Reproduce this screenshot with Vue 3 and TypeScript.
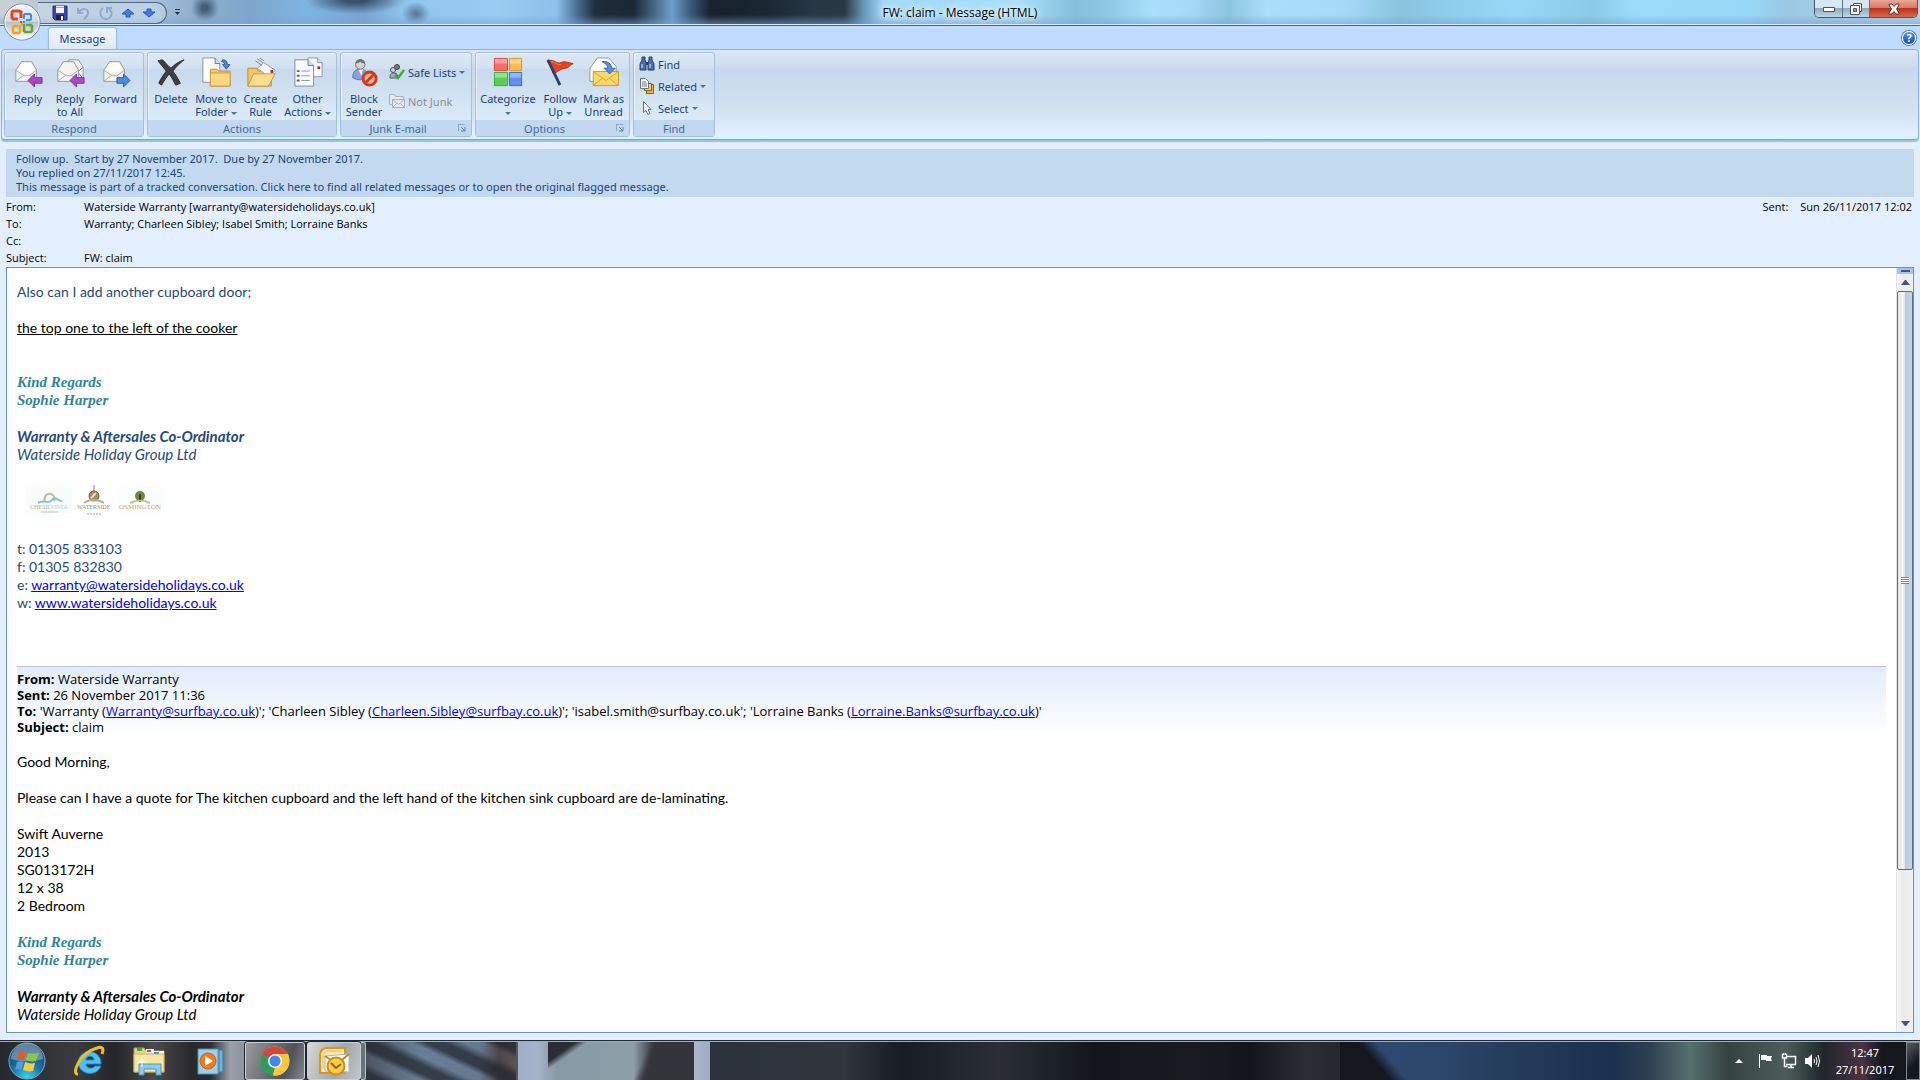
<script setup lang="ts">
interface HeaderRow {
  label: string
  value: string
}

const headerRows: HeaderRow[] = [
  { label: 'From:', value: 'Waterside Warranty [warranty@watersideholidays.co.uk]' },
  { label: 'To:', value: 'Warranty; Charleen Sibley; Isabel Smith; Lorraine Banks' },
  { label: 'Cc:', value: '' },
  { label: 'Subject:', value: 'FW: claim' },
]

const caravan: string[] = ['Swift Auverne', '2013', 'SG013172H', '12 x 38', '2 Bedroom']
</script>

<template>
  <div class="desktop">
    <div class="window">
      <header class="titlebar">
        <div class="quick-access">
          <button class="qat" type="button" aria-label="Save">
            <svg width="16" height="16" viewBox="0 0 16 16">
              <path d="M1 1h14v14H3l-2-2z" fill="#3f45a8" stroke="#2b2f7c" />
              <path d="M4 1h8v7H4z" fill="#eef3fd" />
              <path d="M4 2h8v1H4z" fill="#8fa4dc" />
              <path d="M4 10h8v5H4z" fill="#20244f" />
              <path d="M9 11h2v4H9z" fill="#fff" />
            </svg>
          </button>
          <button class="qat" type="button" aria-label="Undo">
            <svg width="16" height="16" viewBox="0 0 16 16" fill="none" stroke="#8fa9cc" stroke-width="2">
              <path d="M3 3v5h5M4 7c3-4 9-4 9 1 0 3-2 4-4 6" />
            </svg>
          </button>
          <button class="qat" type="button" aria-label="Redo">
            <svg width="16" height="16" viewBox="0 0 16 16" fill="none" stroke="#8fa9cc" stroke-width="2">
              <path d="M5 3C0 7 3 14 8 14s8-6 3-10M9 8V3h5" />
            </svg>
          </button>
          <button class="qat" type="button" aria-label="Previous item">
            <svg width="14" height="14" viewBox="0 0 14 14">
              <path d="M7 3l6 5H9v3H5V8H1z" fill="#3f7bea" stroke="#2556c0" />
            </svg>
          </button>
          <button class="qat" type="button" aria-label="Next item">
            <svg width="14" height="14" viewBox="0 0 14 14">
              <path d="M7 11L1 6h4V3h4v3h4z" fill="#3f7bea" stroke="#2556c0" />
            </svg>
          </button>
        </div>
        <button class="customize" type="button" aria-label="Customize toolbar">
          <svg width="7" height="8" viewBox="0 0 7 8"><path d="M1 1h5v1H1zM1 4h5L3.5 7z" fill="#1c3350" /></svg>
        </button>
        <h1 class="caption">FW: claim - Message (HTML)</h1>
        <div class="window-buttons">
          <button class="win min" type="button" aria-label="Minimize">
            <svg width="14" height="8" viewBox="0 0 14 8"><path d="M1.5 2.5h11v4h-11z" fill="#fff" stroke="#475569" /></svg>
          </button>
          <button class="win max" type="button" aria-label="Restore">
            <svg width="14" height="14" viewBox="0 0 14 14" fill="#fff" stroke="#475569">
              <path d="M4.5 1.5h8v8h-8z" /><path d="M1.5 3.5h9v9h-9z" /><path d="M4.5 6.5h3v3h-3z" fill="#8ea3b5" />
            </svg>
          </button>
          <button class="win close" type="button" aria-label="Close">
            <svg width="14" height="12" viewBox="0 0 14 12">
              <path d="M2 1h3l2 2.500L9 1h3v1L9.500 6l2.500 4v1H9L7 8.500 5 11H2v-1L4.500 6 2 2z" fill="#fff" stroke="#5a3434" />
            </svg>
          </button>
        </div>
      </header>

      <button class="office" type="button" aria-label="Office button">
        <svg width="38" height="38" viewBox="0 0 38 38">
          <defs>
            <linearGradient id="orb" x1="0" y1="0" x2="0" y2="1">
              <stop offset="0" stop-color="#f4f6fa" /><stop offset=".48" stop-color="#d3dae6" />
              <stop offset=".5" stop-color="#b4bfd0" /><stop offset="1" stop-color="#fff" />
            </linearGradient>
          </defs>
          <circle cx="19" cy="19" r="18" fill="url(#orb)" stroke="#75849b" />
          <circle cx="19" cy="19" r="17" fill="none" stroke="#f8fafd" />
          <g fill="none" stroke-width="2.500">
            <path d="M18 15V9l-2-1H10L9 9v6l1 1h5" stroke="#e0481a" stroke-width="3" />
            <path d="M21 16v-4l1-1h5l1 1v4l-1 1h-4" stroke="#3d8fe0" stroke-width="2" />
            <path d="M17 22v7l-1 1h-5l-1-1v-5l1-1h4" stroke="#f5a512" />
            <path d="M21 21v7l1 1h6l1-1v-5l-1-1h-5" stroke="#6aa52a" />
          </g>
          <g><path d="M17 18h2v2h-2z" fill="#e0481a" /><path d="M20 18h2v2h-2z" fill="#3d8fe0" /><path d="M18 20h2v2h-2z" fill="#f5a512" /></g>
        </svg>
      </button>

      <nav class="tabs">
        <button class="tab" type="button">Message</button>
        <button class="help" type="button" aria-label="Help">?</button>
      </nav>

      <div class="ribbon">
        <section class="group respond">
          <div class="tools">
            <button class="big w42" type="button">
              <svg class="ico" viewBox="0 0 32 32">
                <path d="M3 14L9 5h11l5 9v12H3z" fill="#f6f4ea" stroke="#8a94a6" />
                <path d="M3 14l9 6h5l8-6M3 26l9-7M25 26l-8-7" fill="none" stroke="#a3abb9" />
                <path d="M5 14L10 6h9l4 8-6 4h-5z" fill="#fffef6" />
                <path d="M16 25l7-7v4h8v6h-8v4z" fill="#a749c9" stroke="#7c2ca4" />
              </svg>
              <span>Reply</span>
            </button>
            <button class="big w42" type="button">
              <svg class="ico" viewBox="0 0 32 32">
                <path d="M10 12l5-9h10l5 8v12H10z" fill="#f6f4ea" stroke="#8a94a6" />
                <path d="M30 23l-6-7 6-5" fill="none" stroke="#6b7688" />
                <path d="M3 14L9 5h11l5 9v12H3z" fill="#f6f4ea" stroke="#8a94a6" />
                <path d="M3 14l9 6h5l8-6M3 26l9-7M25 26l-8-7" fill="none" stroke="#a3abb9" />
                <path d="M16 25l7-7v4h8v6h-8v4z" fill="#a749c9" stroke="#7c2ca4" />
              </svg>
              <span>Reply<br />to All</span>
            </button>
            <button class="big w49" type="button">
              <svg class="ico" viewBox="0 0 32 32">
                <path d="M3 14L9 5h11l5 9v12H3z" fill="#f6f4ea" stroke="#8a94a6" />
                <path d="M3 14l9 6h5l8-6M3 26l9-7M25 26l-8-7" fill="none" stroke="#a3abb9" />
                <path d="M5 14L10 6h9l4 8-6 4h-5z" fill="#fffef6" />
                <path d="M31 25l-7-7v4h-7v6h7v4z" fill="#4d8ae6" stroke="#2a5cb5" />
              </svg>
              <span>Forward</span>
            </button>
          </div>
          <h2>Respond</h2>
        </section>

        <section class="group actions">
          <div class="tools">
            <button class="big w44" type="button">
              <svg class="ico" viewBox="0 0 32 32">
                <path d="M2 4l5-1c3 3 6 7 9 9 4-4 8-7 14-9-5 4-9 8-12 12 3 4 6 9 8 13l-5 2c-2-4-4-8-7-12-3 4-6 8-8 12l-3-2c2-5 5-9 8-13-3-4-6-7-9-11z" fill="#3d3f42" stroke="#2a2c2f" />
              </svg>
              <span>Delete</span>
            </button>
            <button class="big w46" type="button">
              <svg class="ico" viewBox="0 0 32 32">
                <path d="M2 1h13l5 6v20H2z" fill="#fff" stroke="#8593ab" /><path d="M15 1v6h5" fill="#d5deee" stroke="#63748f" />
                <path d="M10 13h7l2 2h12v16H10z" fill="#f7c865" stroke="#c08a2c" />
                <path d="M10 17h21v14H10z" fill="#fbd983" stroke="#c9973d" />
                <path d="M23 3c4 0 5 2 5 5h3l-4 5-4-5h2c0-2-1-3-3-3z" fill="#4a84dd" stroke="#2c5fb4" />
              </svg>
              <span>Move to<br />Folder <i class="drop"></i></span>
            </button>
            <button class="big w43" type="button">
              <svg class="ico" viewBox="0 0 32 32">
                <path d="M2 12h9l2 3h14v16H2z" fill="#f4c463" stroke="#c08a2c" />
                <path d="M12 12l7-6 12 8-7 7z" fill="#fff" stroke="#8b97aa" />
                <path d="M10 4l7 5M12 2l6 4M15 1l4 3" stroke="#7b8698" />
                <path d="M26 14h3v3h-3z" fill="#d22c2c" />
                <path d="M8 18h23l-7 13H2z" fill="#fcdd8c" stroke="#c9973d" />
              </svg>
              <span>Create<br />Rule</span>
            </button>
            <button class="big w51" type="button">
              <svg class="ico" viewBox="0 0 32 32">
                <path d="M16 1h10l5 5v15H16z" fill="#fff" stroke="#8593ab" /><path d="M26 1v5h5" fill="#d5deee" stroke="#8593ab" />
                <path d="M26 10h3v3h-3z" fill="#c2202b" />
                <path d="M2 3h14l6 6v22H2z" fill="#fbfcfe" stroke="#7988a2" /><path d="M16 3v6h6" fill="#d5deee" stroke="#63748f" />
                <path d="M9 15h9M9 20h9M9 25h9" stroke="#8593ab" />
                <path d="M4 14h3v2H4zM4 19h3v2H4zM4 24h3v2H4z" fill="#5b6472" />
              </svg>
              <span>Other<br />Actions <i class="drop"></i></span>
            </button>
          </div>
          <h2>Actions</h2>
        </section>

        <section class="group junk">
          <div class="tools">
            <button class="big w44" type="button">
              <svg class="ico" viewBox="0 0 32 32">
                <path d="M4 22c0-7 3-9 8-9s8 2 8 9c-4 3-12 3-16 0z" fill="#86a0ea" stroke="#5570bd" />
                <path d="M10 13h5l-2 7z" fill="#fff" />
                <circle cx="12" cy="8" r="5" fill="#d6d3d0" stroke="#6e6e70" />
                <path d="M7 7c0-6 10-6 10 0-3 0-5-2-5-2S9 7 7 7z" fill="#6d6f73" />
                <circle cx="22" cy="23" r="7" fill="#f7b093" stroke="#d23a1c" stroke-width="3" />
                <path d="M17 28l10-10" stroke="#d23a1c" stroke-width="3" />
              </svg>
              <span>Block<br />Sender</span>
            </button>
            <div class="stack junk-stack">
              <button class="small" type="button">
                <svg width="16" height="16" viewBox="0 0 16 16">
                  <circle cx="8" cy="3" r="2.500" fill="#777" stroke="#444" /><circle cx="4" cy="6" r="2.500" fill="#d0cfcf" stroke="#555" />
                  <path d="M1 14c0-4 1-5 4-5s4 2 4 5z" fill="#9fb0da" stroke="#556" />
                  <path d="M6 11l3 3 6-8" fill="none" stroke="#3fae2c" stroke-width="2.500" />
                </svg>
                <span>Safe Lists</span><i class="drop"></i>
              </button>
              <button class="small disabled" type="button" disabled>
                <svg width="16" height="16" viewBox="0 0 16 16" fill="#e4e9f1" stroke="#a8b2c2">
                  <path d="M.5 1.5h5l1 2h8v8H.5z" /><path d="M3.5 6.5h12v8h-12z" /><path d="M3.5 6.5l6 5 6-5M3.500 14.500l4-4M15.500 14.500l-4-4" fill="none" />
                </svg>
                <span>Not Junk</span>
              </button>
            </div>
          </div>
          <h2 class="with-launcher">Junk E-mail</h2>
          <button class="launcher" type="button" aria-label="Junk E-mail options">
            <svg width="8" height="8" viewBox="0 0 8 8"><path d="M0 7V0h7M3 3l4 4M7 3v4H3" fill="none" stroke="#5f81b0" /></svg>
          </button>
        </section>

        <section class="group options">
          <div class="tools">
            <button class="big w60" type="button">
              <svg class="ico" viewBox="0 0 32 32">
                <path d="M1.5 1.5h14v13h-14z" fill="#f76b6b" stroke="#d94343" /><path d="M2 2h13v5H2z" fill="#fba0a0" />
                <path d="M17.5 1.5h13v13h-13z" fill="#fdbb4e" stroke="#dd9117" /><path d="M18 2h12v5H18z" fill="#fed58d" />
                <path d="M1.5 16.5h14v14h-14z" fill="#5cd053" stroke="#3aa936" /><path d="M2 17h13v5H2z" fill="#93e28c" />
                <path d="M17.5 16.5h13v14h-13z" fill="#5d92f3" stroke="#3567c6" /><path d="M18 17h12v5H18z" fill="#93b7f8" />
              </svg>
              <span>Categorize<br /><i class="drop"></i></span>
            </button>
            <button class="big w44" type="button">
              <svg class="ico" viewBox="0 0 32 32">
                <path d="M4 4c6-2 8 4 13 2 4-2 7 0 13 1-4 2-5 5-8 5-4 0-6 2-13 6z" fill="#e8431f" stroke="#b62d12" />
                <path d="M6 5c5 0 7 4 11 3" fill="none" stroke="#f7876a" />
                <path d="M3 3l13 27" stroke="#27406e" stroke-width="3" />
              </svg>
              <span>Follow<br />Up <i class="drop"></i></span>
            </button>
            <button class="big w43" type="button">
              <svg class="ico" viewBox="0 0 32 32">
                <path d="M1 12L9 1h12l8 9v16H1z" fill="#fdfcf5" stroke="#8a94a6" />
                <path d="M4.5 15.5h27v15h-27z" fill="#fbd765" stroke="#c89a28" />
                <path d="M5 16l13 9 13-9M5 30l9-7M31 30l-9-7" fill="none" stroke="#d3a538" />
                <path d="M14 5c6-1 10 2 10 7h4l-6 6-6-6h4c0-3-2-5-6-7z" fill="#5490ea" stroke="#2e62bb" />
              </svg>
              <span>Mark as<br />Unread</span>
            </button>
          </div>
          <h2 class="with-launcher">Options</h2>
          <button class="launcher" type="button" aria-label="Message options">
            <svg width="8" height="8" viewBox="0 0 8 8"><path d="M0 7V0h7M3 3l4 4M7 3v4H3" fill="none" stroke="#5f81b0" /></svg>
          </button>
        </section>

        <section class="group find">
          <div class="tools">
            <div class="stack find-stack">
              <button class="small" type="button">
                <svg width="16" height="16" viewBox="0 0 16 16">
                  <path d="M3 1h3v3l1 3v7H1V8l2-4zM10 1h3v3l2 4v6H9V7l1-3z" fill="#4a6fae" stroke="#243f74" /><path d="M7 6h2v3H7z" fill="#243f74" />
                  <path d="M3 8v4M11 8v4" stroke="#dce8fa" />
                </svg>
                <span>Find</span>
              </button>
              <button class="small" type="button">
                <svg width="16" height="16" viewBox="0 0 16 16">
                  <path d="M7.5 7.5h3l1-1h3v9h-7z" fill="#f2b530" stroke="#8a5d10" /><path d="M5.5 5.5h7v7h-7z" fill="#fbd05e" stroke="#8a5d10" />
                  <path d="M1.5.5h5l3 3v7h-8z" fill="#fff" stroke="#66758f" /><path d="M3 4h4M3 6h5M3 8h5" stroke="#66758f" />
                </svg>
                <span>Related</span><i class="drop"></i>
              </button>
              <button class="small" type="button">
                <svg width="16" height="16" viewBox="0 0 16 16">
                  <path d="M4.5 1.5v11l2.500-2 2 4 2-1-2-4h3z" fill="#fff" stroke="#5a6f96" />
                </svg>
                <span>Select</span><i class="drop"></i>
              </button>
            </div>
          </div>
          <h2>Find</h2>
        </section>
      </div>

      <div class="infobar">
        <div>Follow up.&nbsp; Start by 27 November 2017.&nbsp; Due by 27 November 2017.</div>
        <div>You replied on 27/11/2017 12:45.</div>
        <div>This message is part of a tracked conversation. Click here to find all related messages or to open the original flagged message.</div>
      </div>

      <div class="headers">
        <dl>
          <div v-for="row in headerRows" :key="row.label" class="hrow">
            <dt>{{ row.label }}</dt>
            <dd>{{ row.value }}</dd>
          </div>
        </dl>
        <div class="sent"><span>Sent:</span><span>Sun 26/11/2017 12:02</span></div>
      </div>

      <div class="message">
        <article class="mail">
          <p class="navy">Also can I add another cupboard door;</p>
          <p class="gap1"><u>the top one to the left of the cooker</u></p>
          <div class="regards gap2">Kind Regards<br />Sophie Harper</div>
          <div class="role navy gap1"><b>Warranty &amp; Aftersales Co-Ordinator</b><br />Waterside Holiday Group Ltd</div>
          <div class="logos">
            <svg width="48" height="38" viewBox="0 0 48 38">
              <path d="M0 6h46v26H0z" fill="#f8fcfb" />
              <path d="M19 20a5 5 0 1 1 9 0" fill="none" stroke="#c9b98a" stroke-width="2" />
              <path d="M12 22c8-4 10 2 14-3s6 2 10 1" fill="none" stroke="#7fc3cc" stroke-width="2" />
              <text x="4" y="28" font-size="6" fill="#b7b095">CHESIL<tspan fill="#a6cfcf">VISTA</tspan></text>
              <path d="M15 31h17" stroke="#a6cfcf" />
            </svg>
            <svg width="44" height="38" viewBox="0 0 44 38">
              <path d="M20 4v6" stroke="#8c7d5c" /><circle cx="20" cy="15" r="5" fill="#a28c64" stroke="#6e6045" />
              <path d="M17 17l5-5" stroke="#e9dfc4" stroke-width="2" />
              <path d="M10 22c5-4 14-4 20 0" fill="none" stroke="#bfae88" stroke-width="2" />
              <text x="3" y="28" font-size="6" fill="#9c8e6c">WATERSIDE</text>
              <path d="M13 33h15" stroke="#aaa08a" stroke-dasharray="2 1" />
            </svg>
            <svg width="46" height="38" viewBox="0 0 46 38">
              <path d="M0 6h46v26H0z" fill="#fafdfb" />
              <circle cx="22" cy="15" r="5" fill="#6c8a3c" /><path d="M22 13v8" stroke="#2f4a1d" stroke-width="2" />
              <path d="M12 22c6-3 14-3 20 0" fill="none" stroke="#c3bd95" stroke-width="2" />
              <text x="1" y="28" font-size="7" fill="#b5a98c">OSMINGTON</text>
            </svg>
          </div>
          <div class="contact navy">
            t: 01305 833103<br />f: 01305 832830<br />
            e: <a href="#">warranty@watersideholidays.co.uk</a><br />
            w: <a href="#">www.watersideholidays.co.uk</a>
          </div>
          <div class="quoted">
            <b>From:</b> Waterside Warranty<br />
            <b>Sent:</b> 26 November 2017 11:36<br />
            <b>To:</b> 'Warranty (<a href="#">Warranty@surfbay.co.uk</a>)'; 'Charleen Sibley (<a href="#">Charleen.Sibley@surfbay.co.uk</a>)'; 'isabel.smith@surfbay.co.uk'; 'Lorraine Banks (<a href="#">Lorraine.Banks@surfbay.co.uk</a>)'<br />
            <b>Subject:</b> claim
          </div>
          <p class="gap1">Good Morning,</p>
          <p class="gap1">Please can I have a quote for The kitchen cupboard and the left hand of the kitchen sink cupboard are de-laminating.</p>
          <div class="gap1"><div v-for="line in caravan" :key="line">{{ line }}</div></div>
          <div class="regards gap1">Kind Regards<br />Sophie Harper</div>
          <div class="role gap1"><b>Warranty &amp; Aftersales Co-Ordinator</b><br />Waterside Holiday Group Ltd</div>
        </article>
        <div class="scrollbar">
          <div class="split"></div>
          <button class="arrow" type="button" aria-label="Scroll up"><svg width="9" height="5" viewBox="0 0 9 5"><path d="M0 5l4-5h1l4 5z" fill="#45567f" /></svg></button>
          <div class="track"><div class="thumb"><div class="grip"></div></div></div>
          <button class="arrow" type="button" aria-label="Scroll down"><svg width="9" height="5" viewBox="0 0 9 5"><path d="M0 0l4 5h1l4-5z" fill="#45567f" /></svg></button>
        </div>
      </div>
    </div>

    <footer class="taskbar">
      <button class="start" type="button" aria-label="Start">
        <svg width="38" height="38" viewBox="0 0 38 38">
          <defs>
            <radialGradient id="start" cx=".5" cy=".95" r=".9">
              <stop offset="0" stop-color="#39d5f8" /><stop offset=".45" stop-color="#1676ac" /><stop offset="1" stop-color="#153f66" />
            </radialGradient>
          </defs>
          <circle cx="19" cy="19" r="18" fill="url(#start)" stroke="#85a5bd" />
          <path d="M3 17a16 16 0 0 1 32 0c-10 3-22 3-32 0z" fill="#a9c3d8" opacity=".5" />
          <path d="M11 10c3-2 5-1 7 0l-2 8c-3-1-5-1-7 0z" fill="#e8582a" />
          <path d="M20 11c3 1 6 1 11 0l-3 8c-4 1-7 0-10-1z" fill="#8fc742" />
          <path d="M9 20c3-1 5-1 7 0l-3 8c-2-1-4-1-6 0z" fill="#4d9fe6" />
          <path d="M17 20c3 1 6 2 10 1l-2 8c-4 1-7 0-10-1z" fill="#fccb3c" />
        </svg>
      </button>
      <button class="pin" type="button" aria-label="Internet Explorer">
        <svg width="32" height="32" viewBox="0 0 32 32">
          <path d="M5 17a11 11 0 1 1 23 2H13c0 5 7 5 9 2h6c-4 11-22 10-23-4zm8-2h8c0-5-8-5-8 0z" fill="#4fc0f3" stroke="#1e84c4" />
          <path d="M5 29C-2 30 6 8 24 3c6-2 7 1 5 6" fill="none" stroke="#f3bd1c" stroke-width="3" />
        </svg>
      </button>
      <button class="pin" type="button" aria-label="Windows Explorer">
        <svg width="34" height="32" viewBox="0 0 34 32">
          <path d="M1 3h10l2 3h18v21H1z" fill="#ecd07f" stroke="#b99a4c" />
          <path d="M4 3h5v3H4z" fill="#2fae3b" /><path d="M13 4h8v4h-8z" fill="#fff" /><path d="M14 5h4v2h-4z" fill="#d53b2f" />
          <path d="M20 6h11v4H20z" fill="#fff" /><path d="M21 7h5v2h-5z" fill="#2a86d8" />
          <path d="M1 9h30v18H1z" fill="#f8e7a3" stroke="#c9ae62" />
          <path d="M6 30V19h22v11h-5v-6H11v6z" fill="#8ccbe9" stroke="#4c95bf" />
          <path d="M9 12v10M4 17h10" stroke="#fff" />
        </svg>
      </button>
      <button class="pin" type="button" aria-label="Windows Media Player">
        <svg width="28" height="28" viewBox="0 0 28 28">
          <path d="M8 3h18v22H8z" fill="#6fb3d6" stroke="#3a7fa6" /><path d="M4 3h18v23H4z" fill="#86c3e2" stroke="#3a7fa6" />
          <path d="M1 2h20v25H1z" fill="#9bd0ea" stroke="#4a90b6" />
          <circle cx="11" cy="14" r="8" fill="#f07a1c" stroke="#d55f0c" /><path d="M8 9l8 5-8 5z" fill="#fff" />
        </svg>
      </button>
      <button class="task chrome" type="button" aria-label="Google Chrome">
        <svg width="30" height="30" viewBox="0 0 30 30">
          <circle cx="15" cy="15" r="14.500" fill="#fbc93d" />
          <path d="M2 8a15 15 0 0 1 26 0H15z" fill="#d9453a" /><path d="M2 8l7 11 6 3-2 8A15 15 0 0 1 2 8z" fill="#2b9e5b" />
          <path d="M2 8h13v7H6z" fill="#d9453a" /><path d="M2 8l7 11 6 2v-6z" fill="#2b9e5b" />
          <path d="M15 22l-2 7c4 2 14-1 16-12 1-4-1-9-1-9H15z" fill="#fbc93d" />
          <circle cx="15" cy="15" r="7" fill="#f3f5f7" /><circle cx="15" cy="15" r="5.500" fill="#4286f0" />
        </svg>
      </button>
      <button class="task outlook" type="button" aria-label="Microsoft Outlook">
        <svg width="32" height="30" viewBox="0 0 32 30">
          <path d="M2 27V9c0-5 4-7 7-7h18v25z" fill="#fbe9b9" stroke="#e2930e" stroke-width="2" />
          <path d="M5 23V11c0-4 2-6 5-6h14" fill="none" stroke="#f0b44a" />
          <path d="M7 10l24-2v18l-24-1z" fill="#fff" stroke="#b3b3b3" /><path d="M7 10l12 8L31 8" fill="none" stroke="#c88a16" stroke-width="2" />
          <circle cx="18" cy="20" r="8.500" fill="#f9cd4d" stroke="#cf8e12" stroke-width="2" />
          <path d="M13 17l5 5 5-4" fill="none" stroke="#9b650a" stroke-width="2" />
        </svg>
      </button>
      <div class="task-edge"></div>
      <div class="tray">
        <svg width="8" height="4" viewBox="0 0 8 4"><path d="M0 4l4-4 4 4z" fill="#fff" /></svg>
        <svg width="16" height="16" viewBox="0 0 16 16"><path d="M1 1h1v14H1zM3 2h6v1h5l-1 3 1 2H8V7H3z" fill="#fff" /></svg>
        <svg width="16" height="16" viewBox="0 0 16 16" fill="none" stroke="#fff"><path d="M5 3.500h9.500v8H5M7 14.500h6M10 12v2M1.500 1v4h4V1M3.500 5v8.500h3M2.500 0v2M4.500 0v2" stroke-width="1.500" /></svg>
        <svg width="16" height="16" viewBox="0 0 16 16"><path d="M1 5h3l4-4v14l-4-4H1z" fill="#fff" /><path d="M10 6q1 2 0 4M12 4q2 4 0 8M14 2q3 6 0 12" fill="none" stroke="#fff" /></svg>
        <time class="clock">12:47<br />27/11/2017</time>
      </div>
      <button class="show-desktop" type="button" aria-label="Show desktop"></button>
    </footer>
  </div>
</template>

<style>
body {
  margin: 0;
}
</style>

<style scoped>
.desktop {
  display: flex;
  flex-direction: column;
  height: 100vh;
  overflow: hidden;
  font-family: "Noto Sans", "Open Sans", sans-serif;
  font-size: 11px;
  color: #000;
}
* {
  box-sizing: border-box;
}
button {
  margin: 0;
  padding: 0;
  border: 0;
  background: none;
  font: inherit;
  color: inherit;
}
svg {
  display: block;
  flex: none;
}
h1, h2, p, dl, dd {
  margin: 0;
  font-weight: 400;
}
.window {
  position: relative;
  flex: 1;
  min-height: 0;
  display: flex;
  flex-direction: column;
  background: #e3efff;
}
.titlebar {
  position: relative;
  flex: none;
  display: flex;
  align-items: flex-start;
  height: 26px;
  padding-left: 38px;
  border-bottom: 1px solid #4a6580;
  box-shadow: inset 0 -1px #dcecf8;
  background:
    linear-gradient(180deg, transparent 60%, rgba(120, 160, 210, 0.6) 100%),
    radial-gradient(ellipse 14px 14px at 205px 8px, rgba(50, 75, 95, 0.8) 20%, transparent),
    radial-gradient(ellipse 50px 14px at 355px 0, rgba(40, 60, 80, 0.8) 20%, transparent),
    radial-gradient(ellipse 14px 12px at 416px 14px, rgba(60, 90, 120, 0.7) 10%, transparent),
    linear-gradient(90deg, #c9d2d6 0, #b5c6d4 3%, #a5c0da 8%, #8fb0cc 10%, #7ea6cc 13%, #7fb4e2 16%, #78a5d0 19%, #8fc4ec 21%, #9accf2 26%, #8dc0ea 29%, #4c7297 30%, #1f2e3c 31%, #1b2733 33%, #6b9fcc 35%, #3a5878 36%, #17222c 37%, #1b2733 40%, #263644 42%, #2a3a44 44%, #6798b8 45%, #a3d8f8 46%, #a9dffb 53%, #86bfdb 56%, #92cbe8 58%, #a9dffb 60%, #a5d9f8 62%, #8dc4de 64%, #a9dffb 66%, #a5d9f8 70%, #8ac4dd 73%, #90d0ee 76%, #97d8f8 79%, #8ccbe5 83%, #9bdcfa 85%, #97d8f8 91%, #9cc8e4 93%, #b5d3e6 100%);
}
.quick-access {
  display: flex;
  align-items: center;
  gap: 7px;
  height: 22px;
  margin-top: 2px;
  padding: 0 10px 0 14px;
  border: 1px solid #52677f;
  border-left: 0;
  border-radius: 0 11px 11px 0;
  background: rgba(214, 230, 246, 0.4);
}
.customize {
  margin: 8px 0 0 7px;
}
.caption {
  position: absolute;
  left: 0;
  right: 0;
  top: 4px;
  line-height: 18px;
  font-family: "Open Sans", sans-serif;
  font-size: 12px;
  text-align: center;
  text-shadow: 0 0 6px #fff, 0 0 8px #fff;
}
.window-buttons {
  position: relative;
  display: flex;
  height: 18px;
  margin: 0 2px 0 auto;
  border: 1px solid #46586c;
  border-top: 0;
  border-radius: 0 0 5px 5px;
  overflow: hidden;
}
.win {
  display: grid;
  place-items: center;
  width: 28px;
  background: linear-gradient(#d6e6f2 45%, #90aabe 50%, #bdd6e6);
  border-right: 1px solid #5c7085;
}
.win.max {
  width: 27px;
}
.win.close {
  width: 47px;
  border-right: 0;
  background: linear-gradient(#eaa898 0, #d77a66 45%, #b8331a 50%, #d4694a);
}
.office {
  position: absolute;
  left: 3px;
  top: 3px;
  z-index: 2;
}
.tabs {
  flex: none;
  display: flex;
  align-items: flex-end;
  justify-content: space-between;
  height: 23px;
  padding: 0 4px 0 48px;
  background: #bfdbff;
}
.tab {
  width: 69px;
  height: 22px;
  border: 1px solid #9dbce8;
  border-bottom: 0;
  border-radius: 3px 3px 0 0;
  background: linear-gradient(#eef6ff, #dfe9f5);
  box-shadow: 0 0 2px #7fd8f0;
  color: #15428b;
  font-size: 11px;
  line-height: 22px;
}
.help {
  align-self: center;
  width: 14px;
  height: 14px;
  border: 1px solid #fff;
  border-radius: 7px;
  background: linear-gradient(#5a94ee, #1648b8);
  box-shadow: 0 0 0 1px #5c7fae;
  color: #fff;
  font-size: 11px;
  line-height: 12px;
  font-weight: 700;
}
.ribbon {
  flex: none;
  display: flex;
  gap: 3px;
  height: 91px;
  margin: 0 1px 9px;
  padding: 2px;
  border: 1px solid #8db2e3;
  border-bottom-color: #7fa6c8;
  border-radius: 4px;
  background: linear-gradient(#dce6f4 0, #cfdcec 18%, #c7d8ed 20%, #d3e2f0 70%, #e2f1fe 95%, #c8fbff 100%);
  box-shadow: 0 2px 1px #a3bbdc;
}
.group {
  position: relative;
  display: flex;
  flex-direction: column;
  border: 1px solid #a4bfdc;
  border-radius: 3px;
  background: linear-gradient(#dde8f4 0, #d2e0f0 18%, #c8d9ed 20%, #dcebf8 82%);
  box-shadow: inset 1px 1px rgba(255, 255, 255, 0.5);
  color: #15428b;
}
.respond { width: 140px; }
.actions { width: 190px; }
.junk { width: 132px; }
.options { width: 155px; }
.find { width: 82px; }
.tools {
  flex: 1;
  display: flex;
  padding: 4px 1px 0;
}
.respond .tools,
.options .tools {
  padding-left: 2px;
}
.find .tools {
  padding-top: 3px;
}
.group h2 {
  height: 16px;
  background: #c1d8f0;
  color: #3e6aaa;
  font-size: 11px;
  line-height: 17px;
  text-align: center;
}
.group .with-launcher {
  padding-right: 16px;
}
.launcher {
  position: absolute;
  right: 5px;
  bottom: 4px;
}
.big {
  display: flex;
  flex-direction: column;
  align-items: center;
  justify-content: flex-start;
  line-height: 13px;
  white-space: nowrap;
}
.big .ico {
  width: 30px;
  height: 30px;
  margin-bottom: 5px;
}
.w42 { width: 42px; }
.w43 { width: 43px; }
.w44 { width: 44px; }
.w46 { width: 46px; }
.w49 { width: 49px; }
.w51 { width: 51px; }
.w60 { width: 60px; }
.drop {
  display: inline-block;
  border: 3px solid transparent;
  border-top-color: #4a73ad;
  border-bottom: 0;
  vertical-align: middle;
}
.stack {
  display: flex;
  flex-direction: column;
}
.junk-stack {
  gap: 13px;
  padding: 7px 0 0 3px;
}
.find-stack {
  gap: 6px;
  padding-left: 4px;
}
.small {
  display: flex;
  align-items: center;
  gap: 3px;
  height: 16px;
  white-space: nowrap;
}
.disabled {
  color: #8d8d8d;
}
.infobar {
  flex: none;
  margin: 0 6px;
  padding: 3px 10px;
  background: #c3d9f0;
  color: #15428b;
  line-height: 14px;
}
.headers {
  flex: none;
  display: flex;
  justify-content: space-between;
  padding: 1px 8px 1px 6px;
  font-family: "Open Sans", sans-serif;
  line-height: 17px;
}
.hrow {
  display: flex;
  height: 17px;
}
.hrow dt {
  width: 78px;
}
.sent {
  display: flex;
  gap: 12px;
}
.message {
  flex: 1;
  min-height: 0;
  display: flex;
  margin: 0 6px 7px;
  border: 1px solid #6593cf;
  background: #fff;
}
.mail {
  flex: 1;
  padding: 15px 10px 0 10px;
  overflow: hidden;
  font-family: Lato, "Open Sans", sans-serif;
  font-size: 14px;
  line-height: 18px;
}
.navy { color: #1f497d; }
.gap1 { margin-top: 18px; }
.gap2 { margin-top: 36px; }
.mail a { color: #00f; }
.regards {
  color: #31849b;
  font-family: "Liberation Serif", serif;
  font-size: 15px;
  font-style: italic;
  font-weight: 700;
}
.role {
  font-size: 15px;
  font-style: italic;
}
.logos {
  display: flex;
  height: 38px;
  margin: 18px 0 21px 9px;
  font-family: "Liberation Serif", serif;
}
.quoted {
  margin-top: 54px;
  padding-top: 4px;
  border-top: 1px solid #b5c4df;
  background: linear-gradient(#e1ecfb, #fff);
  font-family: "Open Sans", sans-serif;
  font-size: 13px;
  line-height: 16px;
}
.scrollbar {
  flex: none;
  display: flex;
  flex-direction: column;
  width: 17px;
  border-left: 1px solid #e3e3e3;
  background: linear-gradient(90deg, #f6f6f6, #ebebeb 40%, #f0f0f0);
}
.split {
  height: 6px;
  background: linear-gradient(#45567f, #45567f) center / 9px 2px no-repeat #a6c3ef;
}
.arrow {
  display: grid;
  place-items: center;
  height: 17px;
}
.track {
  flex: 1;
}
.thumb {
  display: grid;
  place-items: center;
  height: 80%;
  border: 1px solid #5b6b8c;
  border-radius: 2px;
  background: linear-gradient(90deg, #e6e6e9, #f3f3f5 45%, #b9cadb 50%, #c9d6e5);
}
.grip {
  width: 8px;
  height: 7px;
  background: repeating-linear-gradient(#7b8794 0 1px, #f4f6f8 1px 2px);
}
.taskbar {
  flex: none;
  display: flex;
  align-items: center;
  height: 40px;
  padding-left: 8px;
  border-top: 1px solid #1d2a38;
  box-shadow: inset 0 1px #a3adb5;
  background:
    linear-gradient(50deg, #14171d 45%, transparent 60%) 1340px 0 / 80px 40px no-repeat,
    linear-gradient(115deg, transparent 40%, #34343b 50%) 610px 0 / 84px 40px no-repeat,
    linear-gradient(145deg, #2a2d35 25%, transparent 35%) 548px 0 / 60px 40px no-repeat,
    repeating-linear-gradient(25deg, rgba(30, 34, 42, 0.7) 0 8px, transparent 16px 24px, rgba(30, 34, 42, 0.7) 30px) 366px 0 / 150px 40px no-repeat,
    linear-gradient(90deg, #25282d 0, #3a3b3f 4%, #25262a 6%, #4a494c 8%, #29292d 10%, #2d2e32 11%, #9aa0aa 12%, #8a8f98 13%, #333438 14%, #4b5462 19%, #6a7f97 22%, #66788e 25%, #4b4448 26%, #5e5558 27%, #a0afc8 27%, #a5b3ca 28%, #8799a5 29%, #8e9fa9 33%, #3b3a41 34%, #3d3b44 36%, #aeb9d0 36%, #a0abc2 37%, #2c323c 37%, #30353e 44%, #171c24 47%, #2b2e36 52%, #12161c 57%, #191b20 62%, #12161c 65%, #2a2d33 68%, #25282f 70%, #2f4b73 71%, #2c4669 75%, #223957 80%, #1c3050 84%, #2f4150 86%, #56706e 88%, #35433f 90%, #4c5d5a 93%, #202629 95%, #4a3345 97%, #14181c 98%);
  color: #fff;
}
.start {
  margin-right: 26px;
}
.pin {
  display: grid;
  place-items: center;
  width: 61px;
}
.start + .pin {
  margin-left: -14px;
}
.task {
  display: grid;
  place-items: center;
  width: 60px;
  height: 38px;
  border: 1px solid #c9cfd6;
  border-radius: 3px;
  background: linear-gradient(110deg, #9b9c9f, #4f5257 70%, #83888e);
  box-shadow: 0 0 0 1px #22262c;
}
.chrome {
  margin-left: 4px;
}
.outlook {
  width: 54px;
  margin-left: 2px;
  background: linear-gradient(110deg, #d5d7da, #a3a6aa 60%, #c3c6ca);
}
.task-edge {
  width: 5px;
  height: 38px;
  border: 1px solid #b9bec4;
  border-left: 0;
  border-radius: 0 3px 3px 0;
  background: #6d7278;
}
.tray {
  display: flex;
  align-items: center;
  gap: 7px;
  margin-left: auto;
}
.tray > svg:first-child {
  margin-right: 8px;
}
.clock {
  width: 76px;
  line-height: 17px;
  font-size: 11px;
  text-align: center;
}
.show-desktop {
  width: 14px;
  height: 38px;
  margin-left: 3px;
  border: 1px solid #7d868c;
  background: linear-gradient(135deg, #555d62, #14181c 60%);
}
</style>
